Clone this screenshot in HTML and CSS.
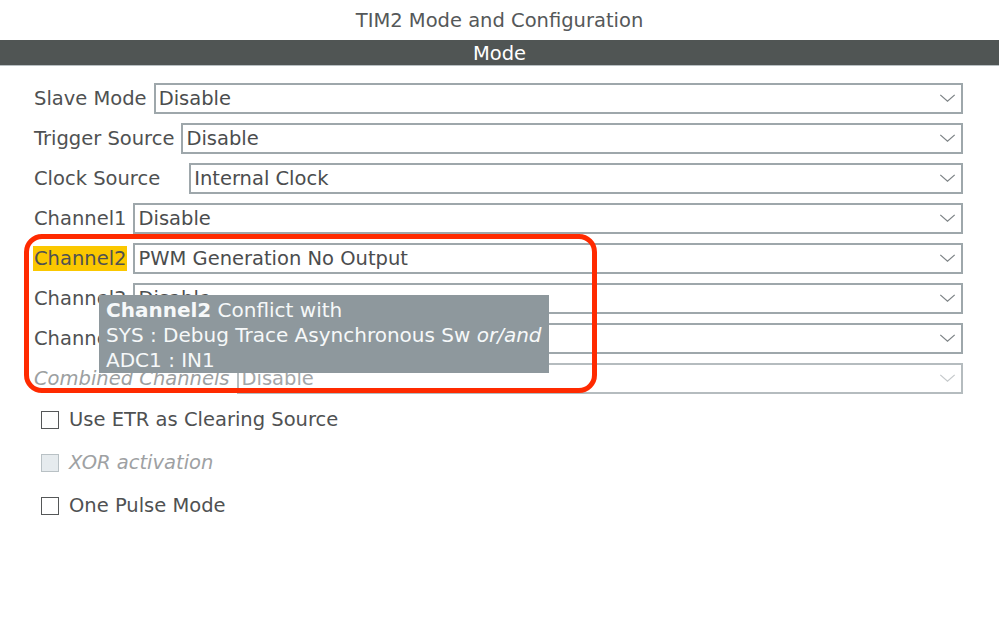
FILE: index.html
```html
<!DOCTYPE html>
<html lang="en">
<head>
  <meta charset="UTF-8" />
  <title>TIM2 Mode and Configuration</title>
  <link rel="stylesheet" href="styles.css">
</head>
<body>
  <div class="panel">
    <div class="title">TIM2 Mode and Configuration</div>
    <div class="section-bar">Mode</div>

    <div class="form">
      <div class="row">
        <span class="label">Slave Mode</span>
        <div class="select"><span>Disable</span><svg class="chev" viewBox="0 0 18 10"><polyline points="1,1 9,8 17,1"/></svg></div>
      </div>
      <div class="row">
        <span class="label">Trigger Source</span>
        <div class="select"><span>Disable</span><svg class="chev" viewBox="0 0 18 10"><polyline points="1,1 9,8 17,1"/></svg></div>
      </div>
      <div class="row">
        <span class="label label-wide">Clock Source</span>
        <div class="select"><span>Internal Clock</span><svg class="chev" viewBox="0 0 18 10"><polyline points="1,1 9,8 17,1"/></svg></div>
      </div>
      <div class="row">
        <span class="label">Channel1</span>
        <div class="select"><span>Disable</span><svg class="chev" viewBox="0 0 18 10"><polyline points="1,1 9,8 17,1"/></svg></div>
      </div>
      <div class="row">
        <span class="label label-warn">Channel2</span>
        <div class="select"><span>PWM Generation No Output</span><svg class="chev" viewBox="0 0 18 10"><polyline points="1,1 9,8 17,1"/></svg></div>
      </div>
      <div class="row">
        <span class="label">Channel3</span>
        <div class="select"><span>Disable</span><svg class="chev" viewBox="0 0 18 10"><polyline points="1,1 9,8 17,1"/></svg></div>
      </div>
      <div class="row">
        <span class="label">Channel4</span>
        <div class="select"><span>Disable</span><svg class="chev" viewBox="0 0 18 10"><polyline points="1,1 9,8 17,1"/></svg></div>
      </div>
      <div class="row disabled">
        <span class="label">Combined Channels</span>
        <div class="select"><span>Disable</span><svg class="chev" viewBox="0 0 18 10"><polyline points="1,1 9,8 17,1"/></svg></div>
      </div>

      <div class="checks">
        <label class="check"><span class="box"></span>Use ETR as Clearing Source</label>
        <label class="check disabled"><span class="box"></span>XOR activation</label>
        <label class="check"><span class="box"></span>One Pulse Mode</label>
      </div>
    </div>

    <div class="highlight"></div>
    <div class="tooltip">
      <div><b>Channel2</b> Conflict with</div>
      <div>SYS : Debug Trace Asynchronous Sw <i>or/and</i></div>
      <div>ADC1 : IN1</div>
    </div>
  </div>
</body>
</html>
```

FILE: styles.css
```css
body {
  margin: 0;
  background: #ffffff;
  font-family: "DejaVu Sans", "Noto Sans", sans-serif;
  font-size: 19.5px;
  color: #4f5152;
}

.panel {
  position: relative;
  width: 999px;
  height: 628px;
  overflow: hidden;
}

.title {
  height: 40px;
  line-height: 41px;
  text-align: center;
  color: #555859;
}

.section-bar {
  height: 25px;
  line-height: 27px;
  background: #505554;
  color: #ffffff;
  text-align: center;
  border-bottom: 1px solid #b9c0c3;
}

.form {
  padding: 12px 36px 0 33px;
}

.row {
  display: flex;
  align-items: center;
  height: 40px;
  gap: 6px;
}

.label {
  white-space: nowrap;
  padding: 0 1px;
}

.label-wide {
  margin-right: 22px;
}

.label-warn {
  background: #fbc800;
  line-height: 25px;
}

.select {
  flex: 1;
  height: 27px;
  display: flex;
  align-items: center;
  justify-content: space-between;
  border: 2px solid #9ea7ab;
  padding: 0 5px 0 3px;
  color: #4b4d4e;
}

.chev {
  width: 17px;
  height: 9px;
  fill: none;
  stroke: #7c8285;
  stroke-width: 1.4;
}

.row.disabled .label {
  font-style: italic;
  color: #9c9fa1;
}

.row.disabled .select {
  color: #a3a6a8;
  border-color: #b5bcbf;
}

.row.disabled .chev {
  stroke: #c5c9cb;
}

.check {
  display: flex;
  align-items: center;
  height: 43px;
  padding-left: 8px;
  gap: 10px;
}

.box {
  width: 16px;
  height: 16px;
  border: 1.5px solid #555758;
  background: #ffffff;
}

.check.disabled {
  font-style: italic;
  color: #9ea1a3;
}

.check.disabled .box {
  background: #e6ebee;
  border-color: #b9c1c5;
}

.highlight {
  position: absolute;
  left: 24px;
  top: 234px;
  width: 563px;
  height: 149px;
  border: 5px solid #ff2a00;
  border-radius: 18px;
}

.tooltip {
  position: absolute;
  left: 99px;
  top: 295px;
  width: 450px;
  height: 78px;
  padding: 3px 0 0 7px;
  box-sizing: border-box;
  background: #8e989d;
  color: #f6f8f9;
  font-size: 20px;
  line-height: 25px;
  white-space: nowrap;
}
```
